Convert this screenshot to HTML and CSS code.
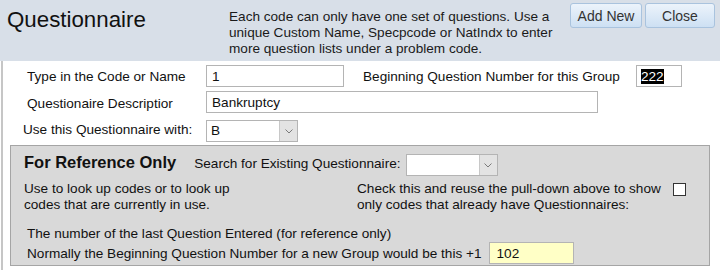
FILE: index.html
```html
<!DOCTYPE html>
<html>
<head>
<meta charset="utf-8">
<link rel="stylesheet" href="styles.css">
</head>
<body>
<div class="header">
  <div class="title">Questionnaire</div>
  <div class="info">Each code can only have one set of questions. Use a<br>unique Custom Name, Specpcode or NatIndx to enter<br>more question lists under a problem code.</div>
  <div class="buttons">
    <button class="btn btn-add">Add New</button>
    <button class="btn btn-close">Close</button>
  </div>
</div>
<div class="main">
  <div class="row">
    <div class="lbl">Type in the Code or Name</div>
    <input class="field field-code" type="text" value="1">
    <div class="lbl-begin">Beginning Question Number for this Group</div>
    <div class="field field-num"><span class="sel">222</span></div>
  </div>
  <div class="row row-desc">
    <div class="lbl lbl-low">Questionaire Descriptior</div>
    <input class="field field-desc" type="text" value="Bankruptcy">
  </div>
  <div class="row row-use">
    <div class="lbl lbl-use">Use this Questionnaire with:</div>
    <div class="select select-use"><span class="select-val">B</span><span class="arrow"><svg width="8" height="5" viewBox="0 0 8 5"><path d="M0.5 0.5 L4 4 L7.5 0.5" fill="none" stroke="#7a7a7a" stroke-width="1"/></svg></span></div>
  </div>
  <div class="refbox">
    <div class="ref-top">
      <div class="ref-title">For Reference Only</div>
      <div class="ref-search">Search for Existing Questionnaire:</div>
      <div class="select select-search"><span class="select-val"></span><span class="arrow"><svg width="8" height="5" viewBox="0 0 8 5"><path d="M0.5 0.5 L4 4 L7.5 0.5" fill="none" stroke="#7a7a7a" stroke-width="1"/></svg></span></div>
    </div>
    <div class="ref-mid">
      <div class="ref-left">Use to look up codes or to look up<br>codes that are currently in use.</div>
      <div class="ref-right">
        <div class="ref-check-text">Check this and reuse the pull-down above to show<br>only codes that already have Questionnaires:</div>
        <span class="checkbox"></span>
      </div>
    </div>
    <div class="ref-bottom">
      <div class="ref-line">The number of the last Question Entered (for reference only)</div>
      <div class="ref-line2">
        <span>Normally the Beginning Question Number for a new Group would be this +1</span>
        <input class="field field-last" type="text" value="102">
      </div>
    </div>
  </div>
</div>
</body>
</html>
```
FILE: styles.css
```css
* { box-sizing: border-box; }
body {
  margin: 0;
  font-family: "Liberation Sans", Arial, sans-serif;
  font-size: 13.6px;
  color: #111;
  background: #fff;
}
.header {
  display: flex;
  align-items: flex-start;
  height: 61px;
  background: #d8dfe8;
}
.title {
  font-size: 22.3px;
  line-height: 25px;
  margin: 7px 0 0 7px;
  width: 222px;
  color: #111;
}
.info {
  margin-top: 9px;
  line-height: 16px;
  width: 335px;
  color: #1a1a1a;
}
.buttons {
  display: flex;
  gap: 3px;
  margin: 3px 5px 0 auto;
}
.btn {
  height: 25px;
  padding: 0;
  border: 1px solid #a9c3de;
  border-radius: 3px;
  background: linear-gradient(#ecf3fb, #cde0f3);
  color: #333;
  font-family: "Liberation Sans", Arial, sans-serif;
  font-size: 14px;
}
.btn-add { width: 72px; }
.btn-close { width: 70px; }

.main {
  margin-left: 1px;
  border-left: 2px solid #c6c6c6;
  padding-top: 4px;
  height: 209px;
}
.row {
  display: flex;
  align-items: center;
  height: 22px;
}
.row-desc { margin-top: 4px; }
.row-use { margin-top: 7px; }
.lbl {
  width: 203px;
  padding-left: 24px;
}
.lbl-low { padding-top: 3px; }
.lbl-use { padding-left: 20px; padding-bottom: 3px; }
.lbl-begin { margin-left: 19px; width: 273px; }
.field {
  height: 22px;
  border: 1px solid #b4b4b4;
  background: #fff;
  font-family: "Liberation Sans", Arial, sans-serif;
  font-size: 13.6px;
  color: #111;
  padding: 0 0 0 5px;
  outline: none;
}
.field-code { width: 138px; }
.field-num { width: 46px; display: flex; align-items: center; padding-left: 4px; }
.sel { background: #000; color: #fff; line-height: 15px; }
.field-desc { width: 392px; }
.select {
  display: flex;
  height: 22px;
  border: 1px solid #b4b4b4;
  background: #fff;
}
.select-use { width: 92px; }
.select-val { flex: 1; padding-left: 4px; line-height: 20px; }
.arrow {
  width: 18px;
  background: #e3e3e3;
  border-left: 1px solid #c8c8c8;
  display: flex;
  align-items: center;
  justify-content: center;
}
.refbox {
  margin: 3px 0 0 7px;
  width: 700px;
  height: 121px;
  border: 1px solid #a5a5a5;
  background: #d9d9d9;
  padding: 6px 0 0 13px;
}
.ref-top {
  display: flex;
  align-items: flex-start;
  height: 22px;
}
.ref-title {
  font-weight: bold;
  font-size: 16.5px;
  line-height: 20px;
}
.ref-search {
  margin: 4px 0 0 18px;
  line-height: 16px;
}
.select-search {
  width: 92px;
  margin: 2px 0 0 5px;
}
.ref-mid {
  display: flex;
  margin-top: 7px;
  line-height: 16px;
}
.ref-left { width: 333px; }
.ref-right { display: flex; align-items: flex-start; }
.ref-check-text { width: 316px; }
.checkbox {
  width: 13px;
  height: 13px;
  border: 1px solid #333;
  background: #fff;
  margin-top: 2px;
}
.ref-bottom {
  margin-top: 13px;
  padding-left: 3px;
}
.ref-line { line-height: 16px; }
.ref-line2 {
  display: flex;
  align-items: center;
  height: 22px;
}
.field-last {
  width: 85px;
  margin-left: 7px;
  padding-left: 7px;
  background: #ffffc6;
}
```
